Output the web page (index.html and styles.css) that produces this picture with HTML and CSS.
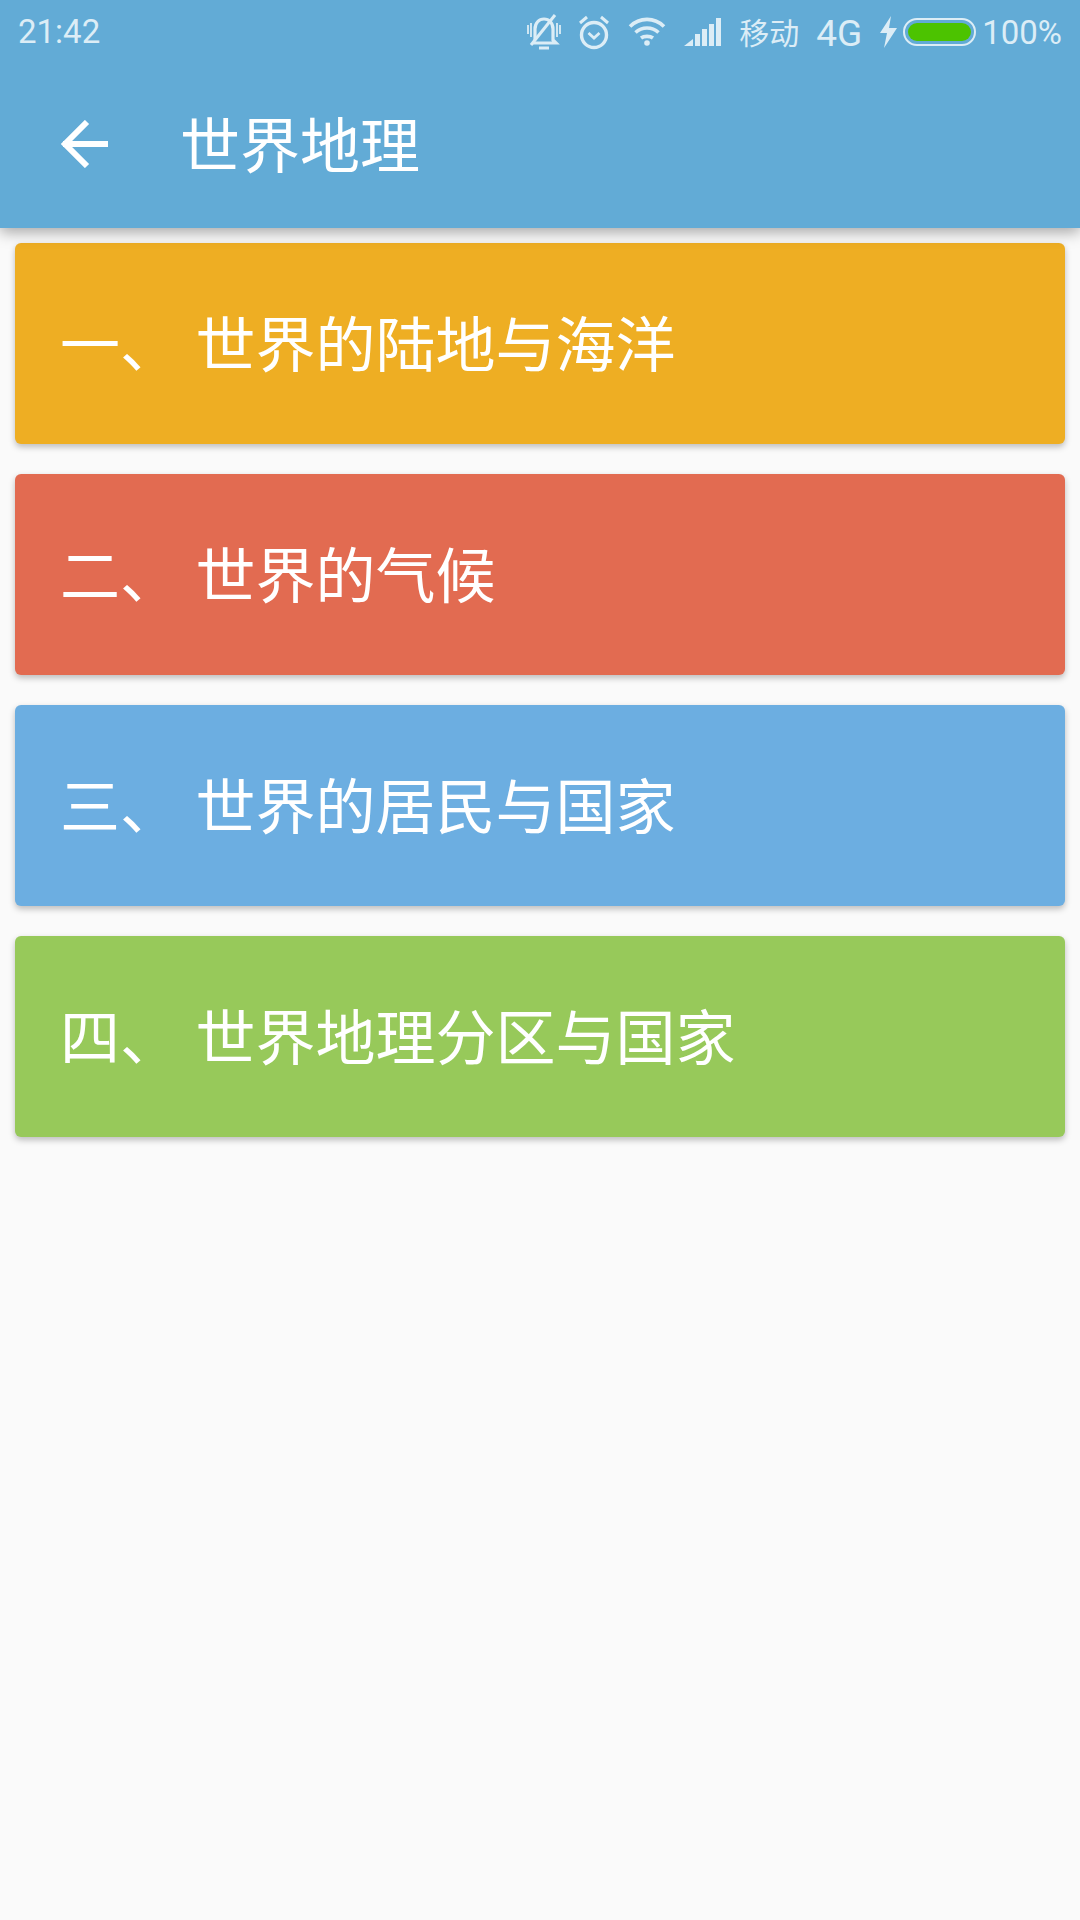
FILE: index.html
```html
<!DOCTYPE html>
<html lang="zh-CN">
<head>
    <meta charset="UTF-8">
    <meta name="viewport" content="width=device-width, initial-scale=1.0">
    <title>世界地理</title>
    <link rel="stylesheet" href="styles.css">
</head>
<body>
    <div class="header">
        <!-- Status bar -->
        <div class="status-bar">
            <span class="time">21:42</span>
            <div class="status-right">
                <svg class="ic-bell" width="34" height="36" viewBox="0 0 34 36" fill="none" stroke="#dcedf6" stroke-width="3.200">
                    <path d="M8 26V15C8 9 12 5 17 5C22 5 26 9 26 15V26L29 29H5"/>
                    <path d="M4 31L28 1" stroke-width="3"/>
                    <path d="M1 11V20M4 9V23M30 9V23M33 11V20" stroke-width="1.800"/>
                    <path d="M12 34H22" stroke-width="3"/>
                </svg>
                <svg class="ic-alarm" width="32" height="36" viewBox="0 0 32 36" fill="none" stroke="#dcedf6" stroke-width="3.400">
                    <circle cx="16" cy="21" r="12.500"/>
                    <path d="M10.500 19L16 24L21.500 19" stroke-width="2.800"/>
                    <path d="M2 9L9 3M30 9L23 3" stroke-width="3"/>
                </svg>
                <svg class="ic-wifi" width="38" height="30" viewBox="0 0 38 30" fill="none" stroke="#dcedf6" stroke-width="3.600">
                    <path d="M2 10.500C11.500 1 26.500 1 36 10.500"/>
                    <path d="M7.500 16.500C14 10.500 24 10.500 30.500 16.500"/>
                    <path d="M13 22C16 19.800 22 19.800 25 22"/>
                    <circle cx="19" cy="27" r="2.800" fill="#dcedf6" stroke="none"/>
                </svg>
                <svg class="ic-signal" width="37" height="28" viewBox="0 0 37 28" fill="#dcedf6">
                    <polygon points="0,28 9,21 9,28"/>
                    <rect x="11" y="16" width="5" height="12"/>
                    <rect x="18" y="11" width="5" height="17"/>
                    <rect x="25" y="6" width="5" height="22"/>
                    <rect x="32" y="0" width="5" height="28"/>
                </svg>
                <span class="carrier">移动</span>
                <span class="net">4G</span>
                <svg class="ic-bolt" width="17" height="32" viewBox="0 0 17 32" fill="#dcedf6">
                    <polygon points="11,0 0,17 7,17 4,32 17,12 9,12"/>
                </svg>
                <div class="battery"><div class="battery-fill"></div></div>
                <span class="percent">100%</span>
            </div>
        </div>
        <!-- Toolbar -->
        <div class="toolbar">
            <svg class="back" width="48" height="48" viewBox="0 0 48 48" fill="none" stroke="#fff" stroke-width="6">
                <path d="M48 24H3"/>
                <path d="M27 2L5 24L27 46"/>
            </svg>
            <h1 class="title">世界地理</h1>
        </div>
    </div>

    <div class="list">
        <div class="card card-yellow">一、 世界的陆地与海洋</div>
        <div class="card card-red">二、 世界的气候</div>
        <div class="card card-blue">三、 世界的居民与国家</div>
        <div class="card card-green">四、 世界地理分区与国家</div>
    </div>
</body>
</html>
```

FILE: styles.css
```css
html, body {
    margin: 0;
    padding: 0;
}
body {
    width: 1080px;
    height: 1920px;
    overflow: hidden;
    background-color: #fafafa;
    font-family: "Noto Sans CJK SC", "Noto Sans", sans-serif;
    color: #fff;
}
.header {
    position: relative;
    z-index: 2;
    height: 228px;
    background-color: #62abd6;
    box-shadow: 0 4px 14px rgba(0, 0, 0, 0.35);
}
.status-bar {
    height: 64px;
    padding: 0 18px 0 18px;
    display: flex;
    align-items: center;
    justify-content: space-between;
    color: #dcedf6;
}
.time {
    font-family: Roboto, sans-serif;
    font-size: 33px;
    margin-bottom: 2px;
}
.status-right {
    display: flex;
    align-items: center;
}
.ic-alarm {
    margin-left: 17px;
}
.ic-wifi {
    margin-left: 18px;
    margin-bottom: 2px;
}
.ic-signal {
    margin-left: 18px;
}
.carrier {
    margin-left: 18px;
    margin-bottom: 2px;
    font-size: 30px;
}
.net {
    margin-left: 17px;
    margin-top: 2px;
    font-family: Roboto, sans-serif;
    font-size: 37px;
}
.ic-bolt {
    margin-left: 18px;
}
.battery {
    margin-left: 6px;
    width: 73px;
    height: 28px;
    box-sizing: border-box;
    border: 2px solid #dcedf6;
    border-radius: 14px;
    padding: 3px;
    background-color: #62abd6;
}
.battery-fill {
    height: 100%;
    border-radius: 9px;
    background-color: #4cc300;
}
.percent {
    margin-left: 6px;
    font-family: Roboto, sans-serif;
    font-size: 33px;
}
.toolbar {
    height: 164px;
    padding: 0 0 0 60px;
    display: flex;
    align-items: center;
}
.back {
    flex-shrink: 0;
    margin-bottom: 5px;
}
.title {
    margin: 0 0 10px 72px;
    font-size: 60px;
    font-weight: 400;
}
.list {
    padding: 15px 15px 0;
    display: flex;
    flex-direction: column;
    gap: 30px;
}
.card {
    height: 201px;
    box-sizing: border-box;
    padding: 0 0 6px 45px;
    display: flex;
    align-items: center;
    border-radius: 6px;
    font-size: 60px;
    white-space: pre;
    word-spacing: 2px;
    box-shadow: 0 3px 6px rgba(0, 0, 0, 0.25);
}
.card-yellow { background-color: #eeae23; }
.card-red { background-color: #e26b51; }
.card-blue { background-color: #6caee1; }
.card-green { background-color: #97c95a; }
```
